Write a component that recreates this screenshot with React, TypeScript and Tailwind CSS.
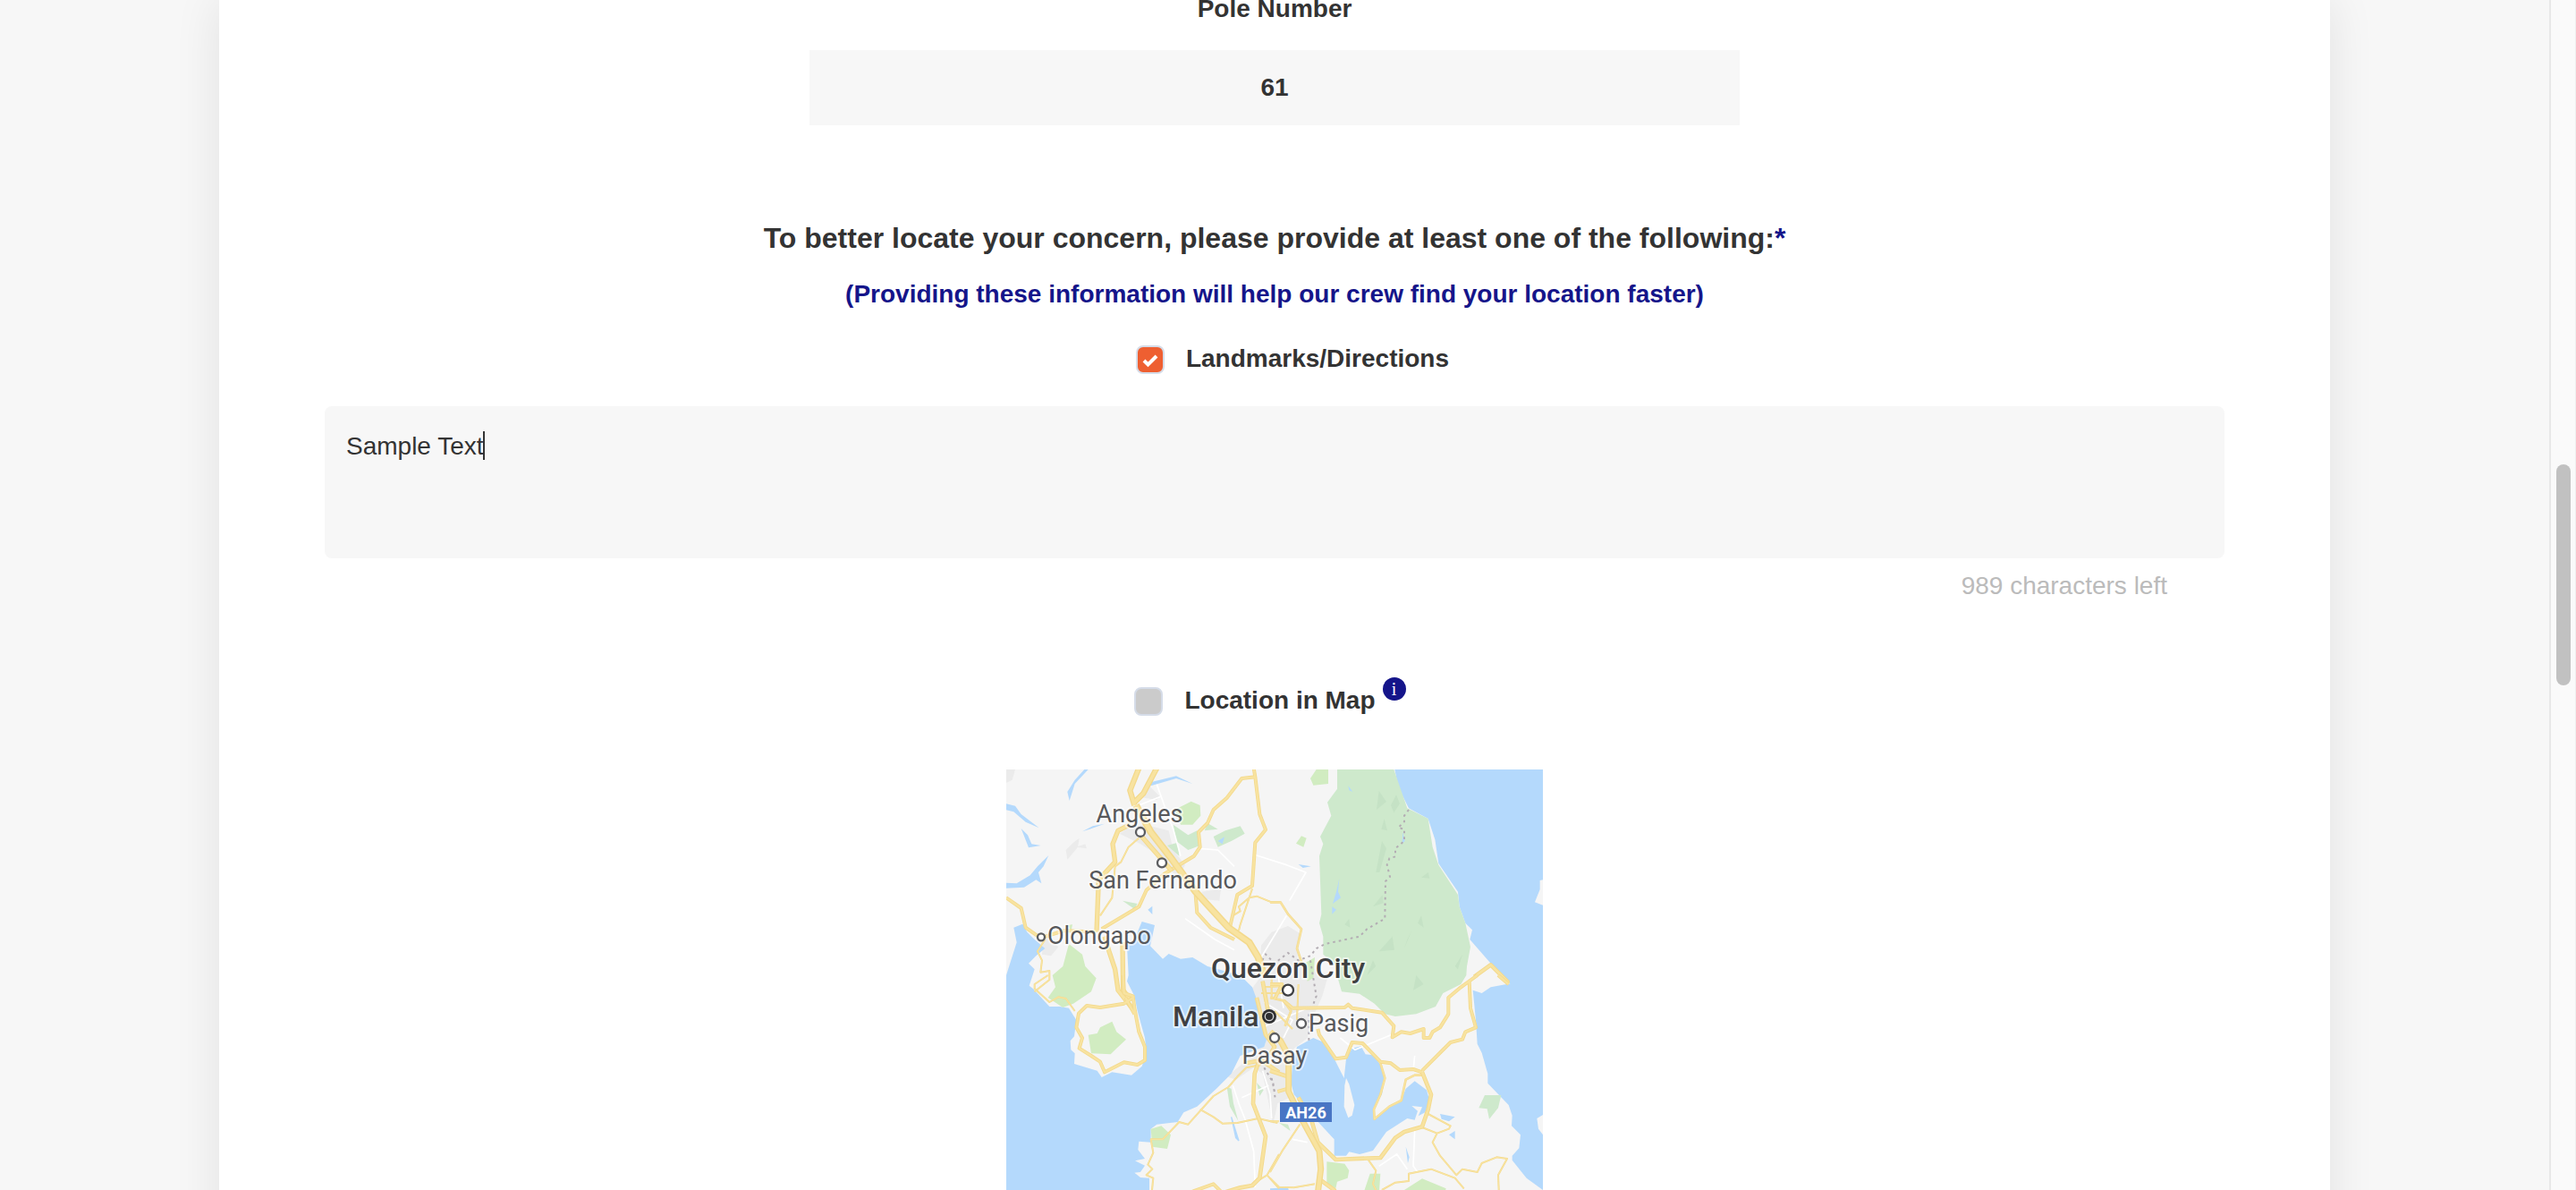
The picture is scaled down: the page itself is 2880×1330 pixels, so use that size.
import React, { useState } from "react";

function Road({ d, w }: { d: string; w: number }) {
  return (
    <>
      <path d={d} stroke="#f3d98c" strokeWidth={w} />
      <path d={d} stroke="#f8e3a0" strokeWidth={w * 0.6} />
    </>
  );
}

function MapLabel({ x, y, size = 27, strong = false, middle = false, children }: {
  x: number; y: number; size?: number; strong?: boolean; middle?: boolean; children: string;
}) {
  return (
    <text
      x={x}
      y={y}
      fontSize={size}
      fontWeight={strong ? 500 : 400}
      textAnchor={middle ? "middle" : "start"}
      fill={strong ? "#3f4042" : "#57585b"}
      stroke="#ffffff"
      strokeWidth={4}
      strokeOpacity={0.6}
      strokeLinejoin="round"
      paintOrder="stroke"
      fontFamily='Roboto, "Liberation Sans", sans-serif'
    >
      {children}
    </text>
  );
}

function LocationMap() {
  return (
    <svg viewBox="0 0 600 600" className="block w-[600px] max-w-full" role="img" aria-label="Map of Metro Manila">
      <rect width="600" height="600" fill="#f5f5f5" />
      <g transform="scale(0.33333)">
        {/* Urban shading */}
        <g fill="#ebebeb">
          <path d="M475 50L515 90L505 102L445 92ZM465 185L545 205L560 270L600 320L575 370L530 300L450 250L380 215L420 190ZM655 410L720 400L715 440L665 435Z" />
          <path d="M855 590L890 545L945 525L985 550L975 640L1080 690L1060 760L1020 850L1010 900L960 940L950 1100L910 1120L895 1190L860 1020L830 1000L770 1040L740 1030L800 980L870 920L850 800L820 740L850 700Z" />
          <path d="M200 270L225 245L245 230L240 260L205 302ZM235 260L265 250L270 265ZM0 0L30 0L20 35L0 45ZM125 555L175 595L150 625L120 620Z" />
        </g>
        {/* Seas and bays */}
        <g fill="#b4d9fc">
          <path d="M0 690L35 580L25 530L55 518L70 545L95 570L130 600L100 625L75 650L95 670L77 725L90 735L145 795L180 795L210 800L235 840L228 895L215 910L217 940L230 952L228 987L305 1010L320 1032L355 1015L420 1025L455 995L470 950L465 900L440 810L430 760L405 710L410 690L405 590L430 570L455 510L498 522L483 592L525 635L545 618L585 635L625 630L675 660L785 690L825 730L840 770L850 840L875 900L865 930L785 960L755 1020L705 1070L640 1130L595 1150L575 1182L505 1190L485 1205L485 1250L445 1247L442 1275L465 1305L432 1312L465 1328L450 1350L430 1352L450 1368L480 1370L480 1410L470 1800L0 1800Z" />
          <path d="M1303 0L1315 60L1350 130L1415 165L1438 235L1450 315L1515 410L1520 460L1540 515L1563 538L1555 570L1625 650L1690 718L1625 730L1595 750L1565 740L1575 840L1580 920L1595 950L1615 1020L1615 1052L1685 1125L1697 1160L1695 1195L1725 1225L1720 1270L1697 1295L1697 1310L1745 1370L1800 1410V0Z" />
          <path d="M0 115L30 122L50 150L110 196L65 176L25 142L0 136ZM50 198L72 220L85 250L116 255L75 262ZM0 380L35 382L80 355L105 325L142 288L125 325L108 345L118 382L100 370L60 395L0 398ZM275 0L230 48L212 105L205 75L230 35L262 0ZM255 208L290 190L330 182L280 200ZM475 45L570 22L625 48L570 30L485 55Z" />
          <path d="M475 470L490 458L490 486ZM980 318L1022 325L995 330Z" />
        </g>
        <path d="M1800 370L1790 372L1790 402L1773 445L1800 455ZM1800 1158L1780 1170L1785 1205L1800 1225Z" fill="#f5f5f5" />
        {/* Forests and parks */}
        <path d="M1110 0L1110 65L1077 110L1090 155L1053 225L1063 250L1050 290L1057 485L1050 515L1063 560L1063 620L1100 650L1115 710L1125 745L1185 752L1235 785L1270 820L1305 828L1375 820L1440 795L1465 750L1525 720L1543 690L1545 660L1557 595L1540 515L1520 460L1515 420L1450 320L1430 260L1415 165L1345 130L1300 0Z" fill="#cee9cc" />
        <g fill="#c5e2c5">
          <path d="M1250 72L1275 108L1242 135ZM1308 85L1320 115L1300 145L1290 120ZM1268 165L1278 205L1258 200ZM1260 240L1275 265L1252 345L1240 345ZM1262 420L1265 448L1230 460ZM1150 500L1153 530L1135 520ZM1392 490L1400 530L1380 515ZM1295 560L1302 605L1250 610ZM1360 540L1345 570L1335 600ZM1230 640L1240 660L1210 690ZM1415 345L1420 365L1392 362ZM1530 620L1515 670L1505 660ZM1375 690L1400 720L1365 740Z" />
        </g>
        <g fill="#b4d9fc">
          <path d="M1117 365L1113 410L1122 430L1095 450L1107 410ZM1093 460L1107 470L1093 485ZM1147 55L1162 75L1150 70ZM1330 210L1337 240L1328 248Z" />
        </g>
        <path d="M560 185L610 220L640 205L650 255L610 270L570 240ZM540 255L575 245L580 290ZM695 225L735 205L785 190L800 215L755 240L710 260ZM675 180L710 200L665 205ZM390 440L440 450L430 468ZM740 1065L755 1070L762 1120L778 1178L750 1130ZM840 1050L863 1075L850 1095ZM1605 1092L1660 1092L1650 1135L1620 1172L1613 1138L1585 1135Z" fill="#cee9cc" />
        <path d="M710 240L732 226L725 250Z" fill="#b4d9fc" />
        <path d="M565 135L620 107L650 120L652 155L625 185L585 185ZM155 690L190 660L210 585L255 620L265 660L302 700L285 745L225 785L190 798L140 765L165 730ZM275 890L305 885L315 865L355 845L370 880L402 905L370 935L350 955L285 952ZM485 1205L520 1195L552 1225L540 1272L490 1265ZM1040 0H1080V48L1030 53L1020 30ZM990 223L1007 230L997 260L972 248ZM1000 650L1035 630L1030 700L1010 710ZM1075 1315L1135 1322L1150 1345L1145 1370L1110 1382L1105 1405L1075 1385ZM1220 1355L1255 1355L1250 1430L1195 1430ZM1335 1410L1395 1372L1475 1405L1450 1500L1350 1480ZM205 522L222 520L218 540Z" fill="#d1ecc1" />
        {/* Laguna de Bay */}
        <g transform="translate(885 690)">
          <path d="M90 240L145 210L180 225L215 280L248 345L255 280L275 245L305 238L320 265L345 268L370 300L385 345L375 400L345 450L350 485L400 440L440 420L455 380L485 355L525 385L535 420L520 460L497 472L510 442L475 438L495 455L485 485L460 480L390 525L345 588L300 600L265 592L255 605L215 605L215 550L150 480L80 400L70 360L75 300ZM570 465L620 475L600 490L575 482ZM600 535L620 522V550ZM455 575L467 610L462 630ZM0 715L60 712L65 730L0 740Z" fill="#b4d9fc" />
          <path d="M255 345L265 365L283 435L275 470L262 478L248 440L250 370Z" fill="#f5f5f5" />
          <path d="M30 495L60 500L68 522Z" fill="#cee9cc" />
        </g>
        <path d="M755 1165L780 1245L770 1235Z" fill="#b4d9fc" stroke="#b4d9fc" strokeWidth="4" />
        {/* Minor roads and boundaries */}
        <g fill="none" stroke="#ffffff" strokeWidth="5" strokeLinejoin="round">
          <path d="M505 50L530 120L560 200L585 290M445 120L520 90M650 265L710 270L765 325M600 500L700 570L765 605M830 285L940 320L1005 345L950 440M855 630L940 490M760 1060L780 1120L800 1170L830 1280L835 1400M790 1100L880 1060M860 1010L885 1090L890 1170M1120 900L1170 940L1290 890M1370 960L1365 1010M1370 1210L1365 1330L1380 1350M1250 1330L1310 1290L1345 1340M960 1240L1010 1250M865 780L960 840L930 900M870 860L1010 800M910 680L930 800" />
        </g>
        <g fill="none" stroke="#b3adb3" strokeWidth="6" strokeDasharray="8 12">
          <path d="M1350 135L1335 155V175L1315 195L1335 200V240L1305 265V292L1285 298L1277 320L1287 360L1272 375L1270 500L1210 535L1185 560L1070 585L1040 600L1020 625L980 640L945 615L900 650L870 620L825 700" />
          <path d="M1020 640L1040 760L1025 800M1015 820V920M865 1000L895 1050L903 1110M890 1035L900 1080" />
        </g>
        {/* Road network */}
        <g fill="none" strokeLinejoin="round">
          <g transform="translate(-15 -30)">
            <Road w={6} d="M460 260L425 290L400 340L380 355L370 460L330 520M840 430L800 550L795 570M775 520L800 505L795 490L830 460L855 455L905 475L930 475M145 600L120 640L135 670L130 710L160 705V735L110 775" />
            <Road w={12} d="M15 460L65 495L80 560L130 595L210 570L315 575M335 565L460 490L485 435L545 380L645 320L665 290L660 240L690 210L710 165L755 125L805 60L850 55L845 25M850 55L865 180L885 232L850 275L840 420L790 450L765 560M650 450L655 510L700 560L780 600" />
            <Road w={16} d="M465 250L570 370M430 215L390 235L372 280L380 340L325 400L318 575M345 590L360 640L380 700L390 770L445 840M405 610L407 770L430 800" />
            <Road w={19} d="M460 25L430 100L445 150M520 25L475 110L440 145" />
            <Road w={24} d="M450 150L500 240L570 330L650 440L760 560L830 610L860 660L880 720" />
          </g>
          <g transform="translate(885 -30)">
            <Road w={8} d="M0 475H35L60 515L105 565L90 630L110 690" />
            <Road w={14} d="M685 725L740 685L800 745" />
          </g>
          <g transform="translate(-15 690)">
            <Road w={6} d="M155 0L110 30V45L160 90L190 73L215 78L245 120M870 300L820 310L790 340L760 375L710 405L625 500L595 492L540 550H500L508 595L490 635L505 650L485 670L508 680L502 740M665 450L710 475L740 497L790 495L860 480L925 495M865 685L890 670L930 600M890 670L930 715M905 10V80M870 60H960M880 40L960 35" />
            <Road w={12} d="M407 0L410 60L440 70L445 110L460 190L480 240V285L455 300L410 292L345 325L330 290L300 270L260 245L270 210L250 175L258 128L285 102L330 108L410 95L440 75M415 75L445 130M640 725L710 700L735 725" />
            <Road w={14} d="M820 295L870 285L930 325M860 295L848 330L843 430L885 540L865 680L840 705L800 712L740 730M855 75L885 200L915 240L900 265M875 20L900 160" />
          </g>
          <g transform="translate(885 690)">
            <Road w={6} d="M530 465L605 505L600 515L560 530L545 560L570 605L625 670L645 650L695 660L710 630L760 610L795 615L765 670L768 740M510 510L560 530M0 680L30 710L80 712L150 700M375 720L420 695L465 690V665L540 650L620 680L650 715M330 620L355 655L345 700L360 730M100 500L40 590L0 660M0 490L30 490M95 30L90 150M15 120L75 180" />
            <Road w={8} d="M370 295L385 345L370 400L348 450L350 482L400 440L440 420L455 350L485 335H510M50 170L70 120L45 85L0 75" />
            <Road w={12} d="M45 85L75 110L250 108L262 98L275 110L375 125L415 170L410 208L440 190L470 195L515 180V210H535L545 190L570 175L598 130V75L640 40L695 0M510 320L605 225L645 215L655 190L690 175L672 110L668 20M510 325L480 315L435 318L405 295L370 290L310 228L275 225L255 275L220 280L165 200L160 180M765 0L800 30M25 390L60 380M0 30H40L15 80" />
            <Road w={14} d="M95 410L140 490L160 560L220 618L370 612L420 545L450 525L510 508L530 450L540 400L510 325M160 680L215 720L260 790M0 320L60 340" />
            <Road w={21} d="M0 190L35 220L62 270V390L110 490L165 590L170 650L160 730L170 900" />
          </g>
        </g>
        {/* Town markers */}
        <g fill="#ffffff" stroke="#5c5d60" strokeWidth="7">
          <circle cx="450" cy="210" r="15" />
          <circle cx="522" cy="313" r="15" />
          <circle cx="117" cy="562" r="12" />
          <circle cx="990" cy="852" r="15" />
          <circle cx="900" cy="900" r="15" />
          <circle cx="945" cy="740" r="18" stroke="#3f4042" />
        </g>
        <circle cx="882" cy="828" r="24" fill="#2f3032" />
        <circle cx="882" cy="828" r="14" fill="#2f3032" stroke="#d9d9d9" strokeWidth="4" />
      </g>
      <MapLabel x={149} y={59} middle>Angeles</MapLabel>
      <MapLabel x={175} y={133} middle>San Fernando</MapLabel>
      <MapLabel x={46} y={195}>Olongapo</MapLabel>
      <MapLabel x={315} y={233} size={32} strong middle>Quezon City</MapLabel>
      <MapLabel x={186} y={287} size={32} strong>Manila</MapLabel>
      <MapLabel x={338} y={293}>Pasig</MapLabel>
      <MapLabel x={300} y={329} middle>Pasay</MapLabel>
      <rect x="306" y="372" width="58" height="22" fill="#4975c4" />
      <text x="335" y="390" fontSize="18" fontWeight="700" textAnchor="middle" fill="#ffffff" fontFamily='Roboto, "Liberation Sans", sans-serif'>
        AH26
      </text>
    </svg>
  );
}

function Checkbox({ id, defaultChecked = false }: { id: string; defaultChecked?: boolean }) {
  return (
    <span className="relative block size-8">
      <input
        id={id}
        type="checkbox"
        defaultChecked={defaultChecked}
        className="peer block size-8 appearance-none rounded-lg border-2 border-[#d5dce8] bg-[#cbcbcb] checked:bg-[#ee5f31]"
      />
      <svg
        viewBox="0 0 32 32"
        className="pointer-events-none absolute inset-0 hidden size-8 peer-checked:block"
        fill="none"
        stroke="#ffffff"
        strokeWidth="4"
        aria-hidden="true"
      >
        <path d="M9 17L13.500 21.500L23 12" />
      </svg>
    </span>
  );
}

export default function App() {
  const [landmarks, setLandmarks] = useState("Sample Text");

  return (
    <div className='flex h-screen overflow-hidden bg-[#f7f7f7] font-["Liberation_Sans",Arial,sans-serif] text-[28px] leading-10 text-[#333333]'>
      <main className="flex min-w-0 flex-1 justify-center overflow-hidden">
        <form className="flex w-[83%] max-w-[2360px] shrink-0 flex-col items-center self-start bg-white shadow-[0_0_50px_rgba(0,0,0,0.09)]">
          <label htmlFor="pole" className="-mt-2.5 font-bold">Pole Number</label>
          <input
            id="pole"
            defaultValue="61"
            className="mt-[26px] h-[84px] w-[1040px] max-w-full bg-[#f7f7f7] text-center font-bold outline-none"
          />

          <h2 className="mt-[106px] text-center text-[32px] leading-10 font-bold">
            To better locate your concern, please provide at least one of the following:
            <span className="text-[#15158a]">*</span>
          </h2>
          <p className="mt-[23px] text-center font-bold text-[#15158a]">
            (Providing these information will help our crew find your location faster)
          </p>

          <div className="mt-8 flex h-[42px] items-center gap-6 pl-10">
            <Checkbox id="landmarks" defaultChecked />
            <label htmlFor="landmarks" className="self-start font-bold">Landmarks/Directions</label>
          </div>

          <div className="mt-[31px] flex w-[90%] flex-col">
            <div className="relative">
              <textarea
                aria-label="Landmarks/Directions"
                value={landmarks}
                onChange={(e) => setLandmarks(e.target.value)}
                maxLength={1000}
                className="block h-[170px] w-full resize-none rounded-lg bg-[#f7f7f7] px-6 py-[25px] outline-none"
              />
              <span className="pointer-events-none absolute top-7 left-[177px] h-8 w-0.5 bg-[#333333]" />
            </div>
            <p className="mt-[11px] self-end pr-16 text-[#bbbbbb]">{1000 - landmarks.length} characters left</p>
          </div>

          <div className="mt-[88px] flex h-[42px] items-center gap-2 pr-2.5">
            <div className="flex h-[42px] items-center gap-6">
              <Checkbox id="map" />
              <label htmlFor="map" className="self-start font-bold">Location in Map</label>
            </div>
            <button
              type="button"
              aria-label="About location in map"
              className='-mt-1.5 flex size-[26px] items-center justify-center self-start rounded-full bg-[#15158a] font-["Liberation_Serif",serif] text-xl leading-5 text-white'
            >
              i
            </button>
          </div>

          <div className="mt-[55px]">
            <LocationMap />
          </div>
        </form>
      </main>

      <div className="w-[30px] shrink-0 border-r border-l-2 border-r-[#efefef] border-l-[#e8e8e8] bg-[#fafafa]" aria-hidden="true">
        <div className="mx-auto mt-[39vh] h-[247px] w-4 rounded-full bg-[#c1c1c1]" />
      </div>
    </div>
  );
}
